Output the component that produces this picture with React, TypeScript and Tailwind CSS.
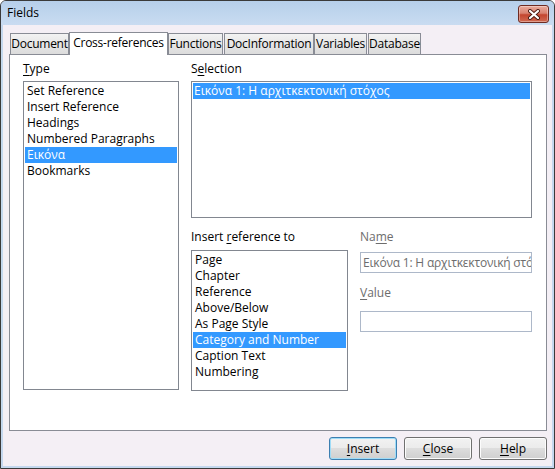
import React from "react";

const tabs: { label: string; w: number; active?: boolean; ml?: number }[] = [
  { label: "Document", w: 59, ml: 1 },
  { label: "Cross-references", w: 99, active: true },
  { label: "Functions", w: 55 },
  { label: "DocInformation", w: 90, ml: 1 },
  { label: "Variables", w: 53 },
  { label: "Database", w: 53, ml: 1 },
];

function U({ children }: { children: React.ReactNode }) {
  return <span className="underline underline-offset-[2px] decoration-1">{children}</span>;
}

function ListBox({
  items,
  selected,
  className,
  textPad = "pl-[2px]",
}: {
  items: string[];
  selected: number;
  className: string;
  textPad?: string;
}) {
  return (
    <div className={`border border-[#828790] bg-white p-px ${className}`}>
      {items.map((it, i) => (
        <div
          key={i}
          className={`h-[16px] leading-[16px] whitespace-nowrap overflow-hidden ${textPad} ${
            i === selected ? "bg-[#3399ff] text-white" : "text-black"
          }`}
        >
          {it}
        </div>
      ))}
    </div>
  );
}

function Btn({ children, def }: { children: React.ReactNode; def?: boolean }) {
  return (
    <div
      className={`w-[68px] h-[23px] rounded-[3px] border flex items-center justify-center text-black ${
        def
          ? "border-[#3c7fb1] shadow-[inset_0_0_0_1px_#9fdcf7] bg-[linear-gradient(#f2f2f2,#ebebeb_50%,#dddddd_50%,#cfcfcf)]"
          : "border-[#707070] shadow-[inset_0_0_0_1px_#fcfcfc] bg-[linear-gradient(#f2f2f2,#ebebeb_50%,#dddddd_50%,#cfcfcf)]"
      }`}
    >
      {children}
    </div>
  );
}

export default function App() {
  return (
    <div className="w-[555px] h-[469px] font-['Open_Sans','Noto_Sans',sans-serif] text-[12px] text-black">
      <div className="relative w-[555px] h-[469px] bg-[#c4d8ee] border border-[#3a3a3a] rounded-t-[6px] flex flex-col overflow-hidden">
        {/* title bar */}
        <div className="h-[24px] shrink-0 bg-[linear-gradient(#b6cfea,#c9dcf1)] flex items-center pl-[6px]">
          <span className="text-[12px] leading-[16px]">Fields</span>
        </div>
        <div className="absolute right-[5px] top-[4px] w-[31px] h-[18px] rounded-[3px] border border-[#6e2b22] bg-[linear-gradient(#e9ab9c,#d98270_45%,#c4462f_55%,#d06a52)] flex items-center justify-center shadow-[inset_0_0_0_1px_rgba(255,255,255,0.35)]">
          <svg width="14" height="11" viewBox="0 0 14 11">
            <path d="M3 2 L11 9 M11 2 L3 9" stroke="#4a1a12" strokeWidth="4" strokeLinecap="round" />
            <path d="M3 2 L11 9 M11 2 L3 9" stroke="#ffffff" strokeWidth="2.2" strokeLinecap="round" />
          </svg>
        </div>

        {/* client */}
        <div className="flex-1 mx-[2px] mb-[2px] bg-[#f4eff5] flex flex-col pl-[6px] pr-[5px]">
          {/* tabs */}
          <div className="mt-[7px] h-[22px] flex items-end tracking-[-0.25px]">
            {tabs.map((t) =>
              t.active ? (
                <div
                  key={t.label}
                  style={{ width: t.w }}
                  className="relative z-10 -mb-px h-[23px] bg-white border border-b-0 border-[#898c95] flex items-start justify-center pt-[2px] leading-[16px] whitespace-nowrap"
                >
                  {t.label}
                </div>
              ) : (
                <div
                  key={t.label}
                  style={{ width: t.w, marginLeft: t.ml ?? 0 }}
                  className="h-[21px] bg-[linear-gradient(#f3f3f3,#e6e6e6_50%,#dcdcdc)] border border-b-0 border-[#898c95] flex items-start justify-center pt-[2px] leading-[16px] whitespace-nowrap"
                >
                  {t.label}
                </div>
              )
            )}
          </div>

          {/* panel */}
          <div className="h-[377px] bg-white border border-[#898c95] pl-[13px] pt-[6px] flex gap-[12px]">
            <div className="w-[156px] flex flex-col">
              <div className="h-[16px] leading-[16px]">
                <U>T</U>ype
              </div>
              <ListBox
                className="mt-[4px] h-[309px]"
                selected={4}
                items={[
                  "Set Reference",
                  "Insert Reference",
                  "Headings",
                  "Numbered Paragraphs",
                  "Εικόνα",
                  "Bookmarks",
                ]}
              />
            </div>
            <div className="w-[341px] flex flex-col">
              <div className="h-[16px] leading-[16px]">
                S<U>e</U>lection
              </div>
              <ListBox
                className="mt-[4px] h-[137px]"
                textPad="pl-[1px]"
                selected={0}
                items={["Εικόνα 1: Η αρχιτκεκτονική στόχος"]}
              />
              <div className="mt-[11px] flex gap-[12px]">
                <div className="w-[157px] flex flex-col">
                  <div className="h-[16px] leading-[16px]">
                    Insert <U>r</U>eference to
                  </div>
                  <ListBox
                    className="mt-[5px] h-[141px]"
                    selected={5}
                    items={[
                      "Page",
                      "Chapter",
                      "Reference",
                      "Above/Below",
                      "As Page Style",
                      "Category and Number",
                      "Caption Text",
                      "Numbering",
                    ]}
                  />
                </div>
                <div className="w-[172px] flex flex-col text-[#6d6d6d]">
                  <div className="h-[16px] leading-[16px]">
                    Na<U>m</U>e
                  </div>
                  <div className="mt-[7px] h-[21px] border border-[#adb8c9] bg-white pl-[2px] leading-[19px] whitespace-nowrap overflow-hidden tracking-[-0.2px]">
                    Εικόνα 1: Η αρχιτκεκτονική στόχος
                  </div>
                  <div className="mt-[12px] h-[16px] leading-[16px]">
                    <U>V</U>alue
                  </div>
                  <div className="mt-[10px] h-[21px] border border-[#adb8c9] bg-white" />
                </div>
              </div>
            </div>
          </div>

          {/* buttons */}
          <div className="mt-[6px] flex justify-end gap-[7px]">
            <Btn def>
              <U>I</U>nsert
            </Btn>
            <Btn>
              <U>C</U>lose
            </Btn>
            <Btn>
              <U>H</U>elp
            </Btn>
          </div>
        </div>
      </div>
    </div>
  );
}
